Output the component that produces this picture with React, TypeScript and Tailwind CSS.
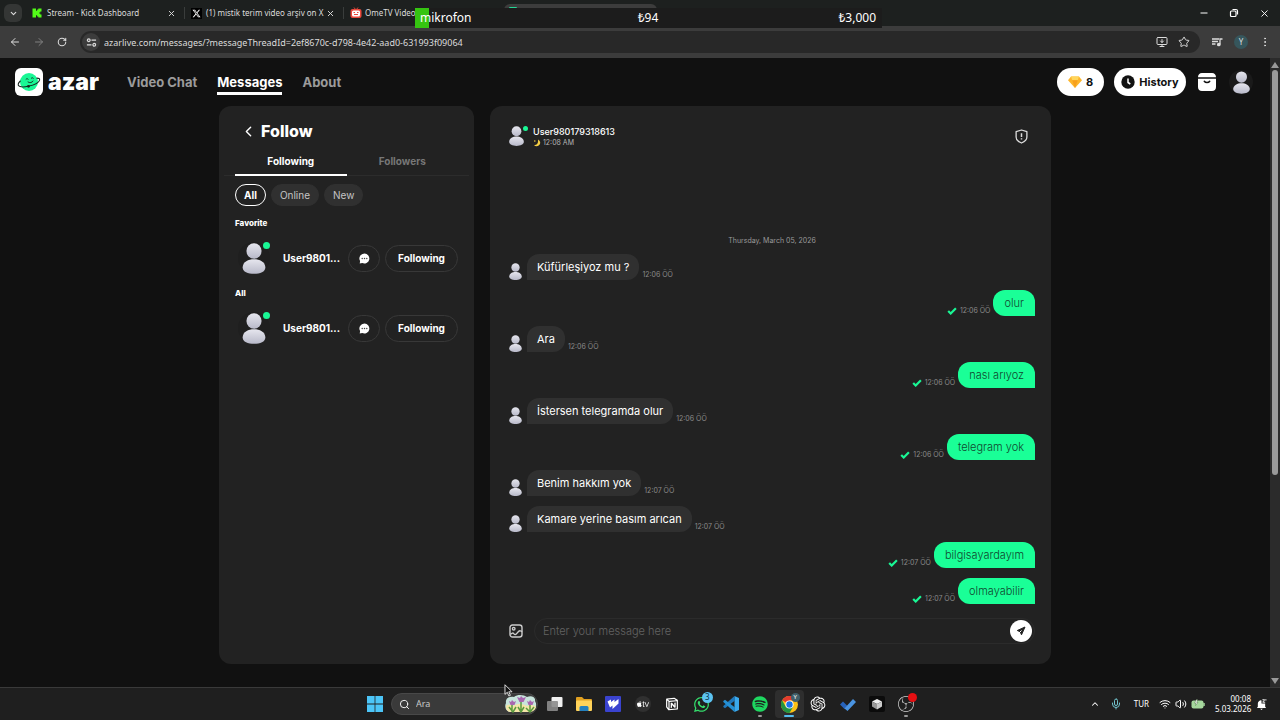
import { useState, type ReactNode } from "react";
import { FaSpotify, FaWhatsapp, FaXTwitter } from "react-icons/fa6";
import { RiNotionLine, RiOpenaiFill } from "react-icons/ri";
import { SiAppletv, SiObsstudio } from "react-icons/si";
import {
  ArrowLeft,
  ArrowRight,
  ChevronDown,
  ChevronLeft,
  ChevronUp,
  EllipsisVertical,
  Mic,
  MonitorDown,
  RotateCw,
  Search,
  Star,
  Volume2,
  Wifi,
  X,
} from "lucide-react";

function Person({ className }: { className: string }) {
  return (
    <svg viewBox="0 0 24 32" className={className} aria-hidden="true">
      <defs>
        <linearGradient id="person" x1="0" y1="0" x2="0" y2="1">
          <stop offset="0" stopColor="#e6e6ee" />
          <stop offset="1" stopColor="#b8b9c9" />
        </linearGradient>
      </defs>
      <ellipse cx="12" cy="8.3" rx="7.8" ry="8" fill="url(#person)" />
      <path
        d="M.3 24.8C.8 19.6 6 16.900 12 16.900s11.200 2.700 11.700 7.900C24.100 29.600 18.600 31.800 12 31.800S-.1 29.600.3 24.800Z"
        fill="url(#person)"
      />
    </svg>
  );
}

function BrowserTab({ icon, title }: { icon: ReactNode; title: string }) {
  return (
    <div className="flex h-full w-[159px] shrink-0 items-center border-r border-[#3a3d3c] pl-[6px] pr-2">
      <span className="flex w-[15px] shrink-0 items-center">{icon}</span>
      <span className="flex-1 whitespace-nowrap">{title}</span>
      <button aria-label={"Close " + title} className="shrink-0">
        <X size={9} strokeWidth={2.5} />
      </button>
    </div>
  );
}

function BrowserChrome() {
  return (
    <header className="relative font-['Noto_Sans',sans-serif] text-[#dcdcdc]">
      <div className="flex h-[26px] items-center bg-[#1d201f] text-[8px]">
        <button
          aria-label="Search tabs"
          className="ml-1 mr-1 flex h-[18px] w-[18px] shrink-0 items-center justify-center rounded-md bg-[#343635]"
        >
          <ChevronDown size={9} strokeWidth={3} />
        </button>
        <div className="flex h-3 items-center">
          <BrowserTab
            icon={
              <svg viewBox="0 0 10 10" className="size-[10px]">
                <path
                  fill="#53fc18"
                  d="M.5.5h3.500v2.300h1.100V1.600h1.200V.5h3.200v3H8.300v1.100H7.200v.8h1.100v1.100h1.200v3H6.300V8.400H5.100V7.200H4v2.300H.5Z"
                />
              </svg>
            }
            title="Stream - Kick Dashboard"
          />
          <BrowserTab
            icon={
              <span className="flex size-[11px] items-center justify-center bg-black text-white">
                <FaXTwitter size={9} />
              </span>
            }
            title="(1) mistik terim video arşiv on X"
          />
          <div className="flex items-center pl-[6px]">
            <svg viewBox="0 0 12 12" className="mr-[3px] size-3">
              <path d="M4 .5 6 3l2-2.500" stroke="#e34b3d" fill="none" />
              <rect x=".5" y="2" width="11" height="9" rx="2" fill="#e9473b" />
              <rect x="2" y="3.500" width="8" height="6" rx="1.500" fill="#fff" />
              <path d="M3.500 5.500h1.500m2 0h1.500M4 7.500h4" stroke="#e9473b" />
            </svg>
            <span className="whitespace-nowrap">OmeTV Video</span>
          </div>
        </div>
        <div className="ml-auto flex gap-5 pr-[10px] text-white">
          <button aria-label="Minimize">
            <svg viewBox="0 0 10 10" className="size-[10px]">
              <path d="M1.500 5h7" stroke="currentColor" />
            </svg>
          </button>
          <button aria-label="Restore">
            <svg viewBox="0 0 10 10" className="size-[10px]" fill="none" stroke="currentColor" strokeWidth="1.200">
              <rect x="1.500" y="3" width="5.500" height="5.500" rx="1" />
              <path d="M3.500 1.500H7A1.500 1.500 0 0 1 8.500 3v3.500" />
            </svg>
          </button>
          <button aria-label="Close window">
            <X size={11} />
          </button>
        </div>
      </div>

      <div className="absolute left-[504px] top-1 h-[22px] w-[153px] rounded-t-md bg-[#3c3c3c]">
        <div className="ml-[5px] mt-[3px] h-px w-2 rounded-t-full bg-[#25d695]" />
      </div>
      <div className="absolute left-[415px] top-2 flex h-5 w-[467px] items-center bg-[#1c1c1c] text-[12px] text-white">
        <div className="absolute left-0 top-0 h-5 w-[14px] bg-[#35c411]" />
        <span className="relative flex-1 pl-[5px]">mikrofon</span>
        <span className="flex-1 text-center">₺94</span>
        <span className="flex-1 pr-[6px] text-right">₺3,000</span>
      </div>

      <div className="flex h-8 items-center bg-[#3c3c3c] pl-[9px]">
        <div className="flex w-[71px] shrink-0 items-center gap-3">
          <button aria-label="Back">
            <ArrowLeft size={12} />
          </button>
          <button aria-label="Forward" className="text-[#808080]">
            <ArrowRight size={12} />
          </button>
          <button aria-label="Reload">
            <RotateCw size={10} strokeWidth={2.5} />
          </button>
        </div>
        <div className="flex h-[22px] flex-1 items-center gap-1 rounded-full bg-[#282828] pr-[10px]">
          <button
            aria-label="Site information"
            className="ml-[2px] flex size-[18px] shrink-0 items-center justify-center rounded-full bg-[#3c3c3c]"
          >
            <svg viewBox="0 0 12 12" className="size-[11px]" fill="none" stroke="currentColor" strokeWidth="1.300">
              <circle cx="3" cy="3.500" r="1.500" />
              <path d="M6 3.500h5M1 8.500h5" />
              <circle cx="9" cy="8.500" r="1.500" />
            </svg>
          </button>
          <input
            aria-label="Address"
            className="h-5 min-w-0 flex-1 bg-transparent text-[9px] text-[#dcdcdc] outline-none"
            defaultValue="azarlive.com/messages/?messageThreadId=2ef8670c-d798-4e42-aad0-631993f09064"
          />
          <div className="flex gap-[10px]">
            <button aria-label="Install app">
              <MonitorDown size={12} />
            </button>
            <button aria-label="Bookmark">
              <Star size={12} />
            </button>
          </div>
        </div>
        <div className="flex items-center gap-[11px] pl-[11px] pr-[9px]">
          <button aria-label="Media controls">
            <svg viewBox="0 0 12 12" className="size-3" fill="none" stroke="currentColor" strokeWidth="1.300">
              <path d="M1 3h7M1 5.500h6M1 8h3.500M9 8.500V3h2.500" />
              <circle cx="7.800" cy="8.500" r="1.200" fill="currentColor" />
            </svg>
          </button>
          <button
            aria-label="Profile"
            className="flex size-[14px] items-center justify-center rounded-full bg-[#36565c] text-[8px]"
          >
            Y
          </button>
          <button aria-label="Menu">
            <EllipsisVertical size={12} />
          </button>
        </div>
      </div>
    </header>
  );
}

const NAV = ["Video Chat", "Messages", "About"];

function SiteHeader() {
  return (
    <div className="flex h-12 items-center pl-[15px] pr-[17px]">
      <a href="#home" className="flex w-[112px] items-center gap-[5px]">
        <svg viewBox="0 0 28 28" className="size-[28px]" aria-hidden="true">
          <rect width="28" height="28" rx="6" fill="#fff" />
          <circle cx="14" cy="14" r="9" fill="#19f795" />
          <g fill="none" stroke="#16251f" strokeWidth="1.100" strokeLinecap="round">
            <path d="M5.300 13C3 15 2.300 17.300 4.500 18.300c2.500 1.100 5.500.7 8.500 0M13 18.300c5.500-1.100 11-3.500 11.600-6.300.3-1.400-1-1.900-2.700-1.900" />
            <path d="M11 11.300c.8-.9 1.600-.8 2.100-.1M16.300 10.300c.8-.8 1.500-.7 2-.1M13 14c1.600 1.200 4.300.7 5-.9" strokeWidth=".9" />
          </g>
          <circle cx="13.500" cy="18.300" r="1.400" fill="#16251f" />
        </svg>
        <span className="text-[23px] font-black leading-6 text-white">azar</span>
      </a>
      <nav className="flex gap-5 text-[13px] font-bold text-[#9b9b9b]">
        {NAV.map((item) => (
          <a
            key={item}
            href={"#" + item}
            className={
              item === "Messages"
                ? "border-b-[3px] border-white pt-[2px] leading-5 text-white"
                : "border-b-[3px] border-transparent pt-[2px] leading-5"
            }
          >
            {item}
          </a>
        ))}
      </nav>
      <div className="ml-auto flex items-center text-[11px] font-bold text-[#111]">
        <button className="mr-[10px] flex h-7 w-[47px] items-center justify-center gap-1 rounded-full bg-white">
          <svg viewBox="0 0 14 12" className="h-3 w-[14px]" aria-hidden="true">
            <path d="M3 .5h8l3 3.800L7 12 0 4.300Z" fill="#fdb52b" />
            <path d="M3 .5h8L9.800 4.300H4.200Z" fill="#ffd65c" />
            <path d="M4.200 4.300h5.600L7 12Z" fill="#f7a01e" />
          </svg>
          8
        </button>
        <button className="mr-[11px] flex h-7 w-[72px] items-center justify-center gap-1 rounded-full bg-white">
          <svg viewBox="0 0 14 14" className="size-[14px]" aria-hidden="true">
            <circle cx="7" cy="7" r="6.700" fill="#111" />
            <path d="M7 3.500V7.500l2.300 1.500" stroke="#fff" strokeWidth="1.500" fill="none" />
          </svg>
          History
        </button>
        <button aria-label="Inbox" className="mr-3">
          <svg viewBox="0 0 20 20" className="size-5">
            <path d="M5 1h10c2.500 0 4 1.800 4 4.300H1C1 2.800 2.500 1 5 1ZM1 6.800h18V15c0 2.500-1.500 4-4 4H5c-2.500 0-4-1.500-4-4Z" fill="#fff" />
            <path d="M7.300 9.300c1.200 1.700 4.200 1.700 5.400 0" stroke="#111" strokeWidth="1.500" strokeLinecap="round" fill="none" />
          </svg>
        </button>
        <button aria-label="Account" className="flex size-6 items-center justify-center rounded-full bg-[#1a1a1a]">
          <Person className="h-[23px] w-[17px]" />
        </button>
      </div>
    </div>
  );
}

function FollowRow({ name }: { name: string }) {
  return (
    <div className="flex h-8 items-center">
      <div className="relative ml-[3px] flex size-8 shrink-0 items-center justify-center rounded-full bg-[#1f1f1f]">
        <Person className="h-[31px] w-6" />
        <span className="absolute right-0 top-0 size-[7px] rounded-full bg-[#19f795]" />
      </div>
      <span className="ml-[13px] flex-1 whitespace-nowrap text-[10px] font-bold text-white">{name}</span>
      <button
        aria-label="Open chat"
        className="mr-[5px] flex h-[27px] w-8 items-center justify-center rounded-full border border-[#383838]"
      >
        <svg viewBox="0 0 12 12" className="size-[11px]">
          <path d="M6 .5A5.500 5.500 0 1 1 3.500 11L.8 11.500 1.200 8.800A5.500 5.500 0 0 1 6 .5Z" fill="#fff" />
          <g fill="#444">
            <circle cx="3.500" cy="6" r=".8" />
            <circle cx="6" cy="6" r=".8" />
            <circle cx="8.500" cy="6" r=".8" />
          </g>
        </svg>
      </button>
      <button className="h-[27px] w-[73px] rounded-full border border-[#383838] text-[10px] font-bold text-white">
        Following
      </button>
    </div>
  );
}

function FollowPanel() {
  const [filter, setFilter] = useState("All");
  return (
    <aside className="w-[255px] shrink-0 rounded-xl bg-[#222] pt-[15px]">
      <div className="flex h-5 items-center pl-[21px]">
        <button aria-label="Back to messages" className="text-white">
          <ChevronLeft size={17} />
        </button>
        <h1 className="ml-1 text-[16px] font-extrabold leading-5 text-white">Follow</h1>
      </div>
      <div className="mx-[5px] mt-[7px] flex h-7 border-b border-[#2c2c2c] px-[11px] text-[10px] font-bold">
        <button className="h-7 flex-1 border-b-2 border-white text-white">Following</button>
        <button className="h-7 flex-1 border-b-2 border-transparent text-[#777]">Followers</button>
      </div>
      <div className="mt-2 flex gap-[5px] px-4 text-[10px]">
        {["All", "Online", "New"].map((f) => (
          <button
            key={f}
            onClick={() => setFilter(f)}
            className={
              f === filter
                ? "h-[22px] rounded-full border border-white px-2 font-bold text-white"
                : "h-[22px] rounded-full border border-[#303030] bg-[#303030] px-2 text-[#c4c4c4]"
            }
          >
            {f}
          </button>
        ))}
      </div>
      <div className="mt-[10px] flex flex-col gap-3 px-4">
        <h2 className="text-[8px] font-extrabold leading-[14px] text-white">Favorite</h2>
        <FollowRow name="User9801..." />
        <h2 className="text-[8px] font-extrabold leading-[14px] text-white">All</h2>
        <FollowRow name="User9801..." />
      </div>
    </aside>
  );
}

const MESSAGES = [
  { text: "Küfürleşiyoz mu ?", time: "12:06 ÖÖ", mine: false },
  { text: "olur", time: "12:06 ÖÖ", mine: true },
  { text: "Ara", time: "12:06 ÖÖ", mine: false },
  { text: "nası arıyoz", time: "12:06 ÖÖ", mine: true },
  { text: "İstersen telegramda olur", time: "12:06 ÖÖ", mine: false },
  { text: "telegram yok", time: "12:06 ÖÖ", mine: true },
  { text: "Benim hakkım yok", time: "12:07 ÖÖ", mine: false },
  { text: "Kamare yerine basım arıcan", time: "12:07 ÖÖ", mine: false },
  { text: "bilgisayardayım", time: "12:07 ÖÖ", mine: true },
  { text: "olmayabilir", time: "12:07 ÖÖ", mine: true },
];

function Message({ text, time, mine }: { text: string; time: string; mine: boolean }) {
  if (mine) {
    return (
      <li className="flex items-end justify-end gap-[3px]">
        <svg viewBox="0 0 10 8" className="mb-px h-2 w-[10px]" aria-hidden="true">
          <path d="m1.200 4 2.500 2.500L8.900 1.300" stroke="#19f795" strokeWidth="2.200" fill="none" />
        </svg>
        <span className="text-[7px] leading-[10px] text-[#8a8a8a]">{time}</span>
        <p className="h-[26px] rounded-xl rounded-br-none bg-[#1aff97] px-[11px] text-[11px] font-light leading-[26px] text-[#11482f]">
          {text}
        </p>
      </li>
    );
  }
  return (
    <li className="flex items-end gap-[3px]">
      <Person className="mr-[2px] h-[17px] w-[13px]" />
      <p className="h-[26px] rounded-xl rounded-bl-none bg-[#303030] px-[10px] text-[11px] leading-[26px] text-white">
        {text}
      </p>
      <span className="text-[7px] leading-[10px] text-[#8a8a8a]">{time}</span>
    </li>
  );
}

function ChatPanel() {
  return (
    <section className="flex min-w-0 flex-1 flex-col rounded-xl bg-[#222] pb-5 pl-[19px] pr-4 pt-4">
      <div className="flex items-center">
        <div className="relative flex h-7 w-[15px] items-center">
          <Person className="h-5 w-[15px]" />
          <span className="absolute -right-1 top-1 size-[5px] rounded-full bg-[#19f795]" />
        </div>
        <div className="ml-[9px] flex-1">
          <h2 className="text-[9px] font-medium leading-[14px] text-white">User980179318613</h2>
          <p className="flex items-center gap-[2px] text-[7px] leading-[8px] text-[#b5b5b5]">
            <svg viewBox="0 0 8 8" className="size-2" aria-hidden="true">
              <path d="M5 .5a3.500 3.500 0 1 1-4 5.500c2.500.5 4.500-1.500 4-5.500Z" fill="#f5cf45" />
              <circle cx="1.800" cy="2" r=".8" fill="#f5cf45" />
            </svg>
            12:08 AM
          </p>
        </div>
        <button aria-label="Report" className="mr-[7px] text-[#ddd]">
          <svg viewBox="0 0 14 16" className="h-[15px] w-[13px]" fill="none" stroke="currentColor" strokeWidth="1.400">
            <path d="m7 1 5.800 1.800V8.500c0 3.500-2.800 5.300-5.800 6.500-3-1.200-5.800-3-5.800-6.500V2.800Z" strokeLinejoin="round" />
            <path d="M7 4.500v4m0 1.300v1.500" strokeWidth="1.600" />
          </svg>
        </button>
      </div>
      <div className="mt-auto pt-4">
        <p className="text-center text-[7px] leading-[10px] text-[#9a9a9a]">Thursday, March 05, 2026</p>
        <ol className="mt-2 flex flex-col gap-[10px]">
          {MESSAGES.map((m) => (
            <Message key={m.text} text={m.text} time={m.time} mine={m.mine} />
          ))}
        </ol>
      </div>
      <form className="mt-[14px] flex items-center" onSubmit={(e) => e.preventDefault()}>
        <button type="button" aria-label="Send picture" className="mr-[11px] text-[#ccc]">
          <svg viewBox="0 0 14 14" className="size-[14px]" fill="none" stroke="currentColor" strokeWidth="1.400">
            <rect x="1" y="1" width="12" height="12" rx="2.500" />
            <circle cx="4.700" cy="4.700" r="1.300" />
            <path d="M1.500 10.500c1.300-2 2.700-1.600 3.500-.6.700.8 1.700.8 2.400 0L9.500 7.500c1-1 2.400-.9 3.500.3" />
          </svg>
        </button>
        <div className="flex h-[26px] flex-1 items-center rounded-full border border-[#2b2b2b] pl-2 pr-[2px]">
          <input
            aria-label="Message"
            placeholder="Enter your message here"
            className="h-5 min-w-0 flex-1 bg-transparent text-[11px] font-light text-white outline-none placeholder:text-[#636363]"
          />
          <button aria-label="Send" className="flex size-[22px] items-center justify-center rounded-full bg-white">
            <svg viewBox="0 0 12 12" className="size-3">
              <path d="M10 2 2.300 5.500l2.900 1.300 1.300 3Z" fill="#222" stroke="#222" strokeLinejoin="round" />
              <path d="m5 7 1.500-1.500" stroke="#fff" />
            </svg>
          </button>
        </div>
      </form>
    </section>
  );
}

const APPS: { name: string; icon: ReactNode }[] = [
  {
    name: "Task view",
    icon: (
      <svg viewBox="0 0 18 16" className="h-4 w-[18px]">
        <rect x="5.500" y="1" width="11" height="10" rx="1" fill="#f0f0f0" />
        <rect x="1" y="5" width="11" height="10" rx="1" fill="#8b8b8b" opacity=".9" />
      </svg>
    ),
  },
  {
    name: "File Explorer",
    icon: (
      <svg viewBox="0 0 18 16" className="h-4 w-[18px]">
        <path d="M1 2a1 1 0 0 1 1-1h5l2 2h7a1 1 0 0 1 1 1v4H1Z" fill="#e0a021" />
        <rect x="1" y="4.500" width="16" height="10.500" rx="1" fill="#ffd35a" />
        <path d="M4.500 15v-3.500a1.500 1.500 0 0 1 1.500-1.500h6a1.500 1.500 0 0 1 1.500 1.500V15Z" fill="#2480bf" />
      </svg>
    ),
  },
  {
    name: "Editor",
    icon: (
      <svg viewBox="0 0 16 16" className="size-4">
        <rect width="16" height="16" rx="1" fill="#3a43cf" />
        <path d="m2.500 5.500 3.500-2v2.500l3.500-2.500V6L13.500 3v4.500L7.500 13V9.500L5 11.500Z" fill="#fff" />
      </svg>
    ),
  },
  {
    name: "Apple TV",
    icon: (
      <span className="flex size-4 items-center justify-center rounded-full bg-[#303030] text-white">
        <SiAppletv size={12} />
      </span>
    ),
  },
  { name: "Notion", icon: <RiNotionLine size={16} color="#fff" /> },
  {
    name: "WhatsApp",
    icon: (
      <span className="relative text-[#35dd6c]">
        <FaWhatsapp size={17} />
        <span className="absolute -right-[3px] -top-1 flex size-[11px] items-center justify-center rounded-full bg-[#5cc4f2] text-[8px] leading-none text-[#083247]">
          3
        </span>
      </span>
    ),
  },
  {
    name: "Visual Studio Code",
    icon: (
      <svg viewBox="0 0 16 16" className="size-4">
        <path d="M11.500 0 16 2v12l-4.500 2Z" fill="#3ba9ec" />
        <path d="m11.500 0 .5 4.500L2 12.300.3 11V10Z" fill="#1f78bc" />
        <path d="m11.500 16 .5-4.500L2 3.700.3 5v1Z" fill="#2590d4" />
      </svg>
    ),
  },
  { name: "Spotify", icon: <FaSpotify size={16} color="#1ed760" /> },
  {
    name: "Chrome",
    icon: (
      <span className="relative">
        <svg viewBox="0 0 18 18" className="size-[17px]">
          <circle cx="9" cy="9" r="9" fill="#fbc116" />
          <path d="M9 9 1.200 4.500A9 9 0 0 1 16.800 4.500H9Z" fill="#e33b2e" />
          <path d="M1.200 4.500A9 9 0 0 0 9 18l3.900-6.700L9 9 5 11.300Z" fill="#229342" />
          <circle cx="9" cy="9" r="4.300" fill="#fff" />
          <circle cx="9" cy="9" r="3.400" fill="#1a73e8" />
        </svg>
        <span className="absolute -right-[2px] -top-[3px] flex size-[9px] items-center justify-center rounded-full bg-[#41606a] text-[6px] leading-none text-white">
          Y
        </span>
      </span>
    ),
  },
  { name: "ChatGPT", icon: <RiOpenaiFill size={18} color="#fff" /> },
  {
    name: "To Do",
    icon: (
      <svg viewBox="0 0 18 14" className="h-[14px] w-[18px]">
        <path d="m1 7.500 3-3 4.500 4.500-3 3Z" fill="#2763bc" />
        <path d="M5.500 11.500 14 2l3 3L8.500 14Z" fill="#4a94e2" />
      </svg>
    ),
  },
  {
    name: "Cursor",
    icon: (
      <svg viewBox="0 0 16 16" className="size-4">
        <rect width="16" height="16" rx="2" fill="#0b0b0b" />
        <path d="m8 3 5 2.500L8 8 3 5.500Z" fill="#eee" />
        <path d="M3 5.500 8 8v5.500L3 10.500Z" fill="#999" />
        <path d="M13 5.500V10.500L8 13.500V8Z" fill="#ccc" />
      </svg>
    ),
  },
  {
    name: "OBS Studio",
    icon: (
      <span className="relative">
        <SiObsstudio size={16} color="#d0d0d0" />
        <span className="absolute -right-[3px] -top-[3px] size-[9px] rounded-full bg-[#e60f12]" />
      </span>
    ),
  },
];

function Taskbar() {
  return (
    <footer className="relative grid h-8 grid-cols-[1fr_auto_1fr] items-center bg-[#1f1f1f] pl-1 font-['Noto_Sans',sans-serif] text-white shadow-[0_-1px_0_#3a3a3a]">
      <span />
      <div className="flex items-center">
        <button aria-label="Start" className="mr-1 flex w-6 justify-center">
          <svg viewBox="0 0 16 16" className="size-4">
            <path d="M0 0h7.600v7.600H0ZM8.400 0H16v7.600H8.400ZM0 8.400h7.600V16H0ZM8.400 8.400H16V16H8.400Z" fill="#4cc5f7" />
          </svg>
        </button>
        <label className="mr-[2px] flex h-[22px] w-[147px] items-center overflow-hidden rounded-full border border-[#484848] bg-[#3a3a3a] pl-[7px]">
          <Search size={11} />
          <input
            aria-label="Search"
            placeholder="Ara"
            className="ml-[6px] min-w-0 flex-1 bg-transparent text-[9px] outline-none placeholder:text-[#c8c8c8]"
          />
          <svg viewBox="0 0 32 18" className="h-[18px] w-8 shrink-0" aria-hidden="true">
            <path d="M1 8C0 3 5 1 9 2c4-3 10-2 13 0 4-2 9 0 8 4 2 3 1 6 0 8L24 17H5C1 16-1 12 1 8Z" fill="#c7e4dc" />
            <path d="M1 11c2-2 5-1 7 0 5-3 10-2 14 0 4-2 8-1 9 1-1 4-4 5-7 5H6c-4 0-5-3-5-6Z" fill="#f3e5a7" />
            <path d="M7 17v-7m9 7V7m9 10v-7M4 12l4 5 3-5m2 0 3 5 3-5m2 1 4 4 4-5" stroke="#5a9a3f" strokeWidth="1.500" fill="none" />
            <path d="m4 6 2 1 1-2 2 2 2-1-1.500 4h-4ZM12 2l3 1 1-2 2 2 3-1-2.500 5h-4ZM22 6l2 1 1-2 2 2 2-1-1.500 4h-4Z" fill="#a867b0" />
          </svg>
        </label>
        <div className="flex w-[381px]">
          {APPS.map((app) => (
            <button
              key={app.name}
              aria-label={app.name}
              className={
                app.name === "Chrome"
                  ? "relative flex h-7 flex-1 items-center justify-center rounded bg-[#2e2e2e]"
                  : "relative flex h-7 flex-1 items-center justify-center"
              }
            >
              {app.icon}
              {app.name === "Chrome" && (
                <span className="absolute bottom-px left-1/2 h-[2px] w-[10px] -translate-x-1/2 rounded-full bg-[#55bdf0]" />
              )}
              {(app.name === "Spotify" || app.name === "OBS Studio") && (
                <span className="absolute bottom-px left-1/2 h-[2px] w-1 -translate-x-1/2 rounded-full bg-[#999]" />
              )}
            </button>
          ))}
        </div>
      </div>
      <div className="flex items-center justify-end pr-[13px] text-[8px]">
        <ChevronUp size={10} className="mr-[10px]" strokeWidth={2.5} />
        <Mic size={12} color="#71c3cc" className="mr-3" />
        <span className="mr-[10px]">TUR</span>
        <Wifi size={12} className="mr-1" />
        <Volume2 size={12} className="mr-1" />
        <svg viewBox="0 0 14 10" className="h-[10px] w-[14px]" aria-hidden="true">
          <rect x=".5" y="1.500" width="12" height="8" rx="2" fill="#a5d79c" />
          <path d="M13 4v3" stroke="#a5d79c" strokeWidth="1.500" />
          <path d="M5.500.5 3.500 4H5L4.500 6.500 7 3.500H5.700L6.500.5Z" fill="#fff" stroke="#3c6135" strokeWidth=".4" />
        </svg>
        <div className="ml-[10px] w-[36px] whitespace-nowrap text-right leading-[10px]">
          00:08
          <br />
          5.03.2026
        </div>
        <svg viewBox="0 0 12 12" className="ml-[5px] size-[11px]" aria-hidden="true">
          <path d="M2 8.500V5a3.500 3.500 0 0 1 4-3.500V5h4v3.500l1 1.200H1ZM4.500 10.500h3L6 12Z" fill="#fff" />
          <path d="M7 .8h2.500L7.300 3.500H10M10 1h1.500" stroke="#fff" fill="none" />
        </svg>
      </div>
      <svg viewBox="0 0 9 14" className="absolute left-[504px] top-[-4px] h-[13px] w-[9px]" aria-hidden="true">
        <path d="M.7.8v10.400l2.500-2.300 1.700 4 1.600-.7-1.700-3.800h3.500Z" fill="#111" stroke="#fff" strokeWidth=".9" />
      </svg>
    </footer>
  );
}

export default function App() {
  return (
    <div className="flex min-h-screen flex-col bg-[#111]">
      <BrowserChrome />
      <div className="flex flex-1">
        <div className="flex flex-1 flex-col font-['Inter',sans-serif]">
          <SiteHeader />
          <main className="mx-auto flex w-full max-w-[832px] flex-1 gap-4 pb-6">
            <FollowPanel />
            <ChatPanel />
          </main>
        </div>
        <div className="flex w-[10px] flex-col items-center bg-[#2b2b2b] py-1" aria-hidden="true">
          <svg viewBox="0 0 8 6" className="h-[6px] w-2">
            <path d="M4 0 8 6H0Z" fill="#9a9a9a" />
          </svg>
          <div className="mt-[2px] w-[6px] flex-[406] rounded-full bg-[#9a9a9a]" />
          <div className="flex-[204]" />
          <svg viewBox="0 0 8 6" className="h-[6px] w-2">
            <path d="M0 0h8L4 6Z" fill="#9a9a9a" />
          </svg>
        </div>
      </div>
      <Taskbar />
    </div>
  );
}
